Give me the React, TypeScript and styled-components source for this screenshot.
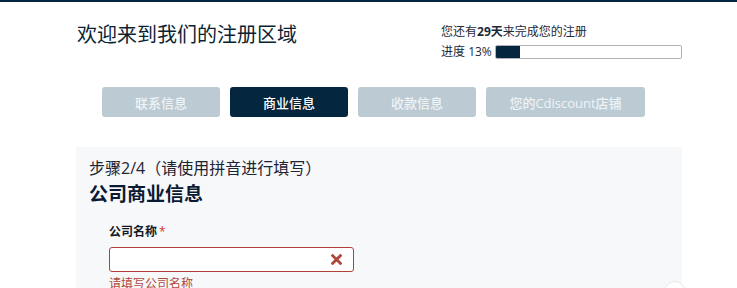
import React from 'react';
import styled, { createGlobalStyle } from 'styled-components';

const GlobalStyle = createGlobalStyle`
  body {
    margin: 0;
    background: #fff;
    font-family: "Open Sans", "Noto Sans CJK SC", sans-serif;
    color: #0b1f33;
    overflow: hidden;
  }
`;

const TopBar = styled.div`
  height: 2px;
  background: #04263f;
`;

const Page = styled.div`
  width: 606px;
  margin-left: 76px;
`;

const Header = styled.header`
  display: flex;
  justify-content: space-between;
  align-items: flex-start;
  padding-top: 19px;
  height: 66px;
  box-sizing: border-box;
`;

const Title = styled.h1`
  margin: 0;
  padding-left: 1px;
  font-size: 20px;
  font-weight: 400;
  line-height: 28px;
  color: #0b1f33;
`;

const Status = styled.div`
  width: 241px;
  display: flex;
  flex-direction: column;
  gap: 3px;
  padding-top: 2px;
  font-size: 12px;
  color: #1d2a38;
`;

const Days = styled.div`
  line-height: 17px;
  b {
    font-weight: 700;
  }
`;

const ProgressRow = styled.div`
  display: flex;
  align-items: center;
  gap: 3px;
  line-height: 17px;
`;

const Track = styled.div`
  flex: 1;
  height: 12px;
  border: 1px solid #aeb3b8;
  border-radius: 2px;
  background: #fff;
  overflow: hidden;
`;

const Fill = styled.div`
  height: 100%;
  background: #04263f;
`;

const Tabs = styled.nav`
  display: flex;
  gap: 10px;
  padding-left: 26px;
  margin-top: 19px;
`;

const Tab = styled.div<{ $active?: boolean; $wide?: boolean }>`
  width: ${(p) => (p.$wide ? 159 : 118)}px;
  height: 30px;
  border-radius: 3px;
  display: flex;
  align-items: center;
  justify-content: center;
  font-size: 13px;
  font-weight: 500;
  background: ${(p) => (p.$active ? '#04263f' : '#bccbd3')};
  color: ${(p) => (p.$active ? '#ffffff' : '#eef3f6')};
`;

const Panel = styled.section`
  margin-top: 30px;
  background: #f7f8fa;
  padding: 10px 13px 20px;
  height: 200px;
  box-sizing: border-box;
`;

const Step = styled.div`
  font-size: 16px;
  line-height: 22px;
  color: #1d2433;
`;

const SectionTitle = styled.h2`
  margin: 2px 0 0;
  font-size: 19px;
  font-weight: 700;
  line-height: 26px;
  color: #0b1a33;
`;

const Field = styled.div`
  margin: 17px 0 0 20px;
  width: 245px;
`;

const Label = styled.label`
  display: block;
  font-size: 12px;
  font-weight: 700;
  line-height: 16px;
  color: #141a24;
  span {
    color: #d0312d;
    font-weight: 400;
    margin-left: 2px;
  }
`;

const InputBox = styled.div`
  margin-top: 7px;
  height: 25px;
  border: 1px solid #b23f3a;
  border-radius: 3px;
  background: #fff;
  display: flex;
  align-items: center;
  justify-content: flex-end;
  padding-right: 11px;
  box-sizing: border-box;
`;

const ErrorText = styled.div`
  margin-top: 4px;
  font-size: 12px;
  line-height: 16px;
  color: #b0473a;
`;

const Bubble = styled.div`
  position: absolute;
  left: 664px;
  top: 281px;
  width: 20px;
  height: 20px;
  border-radius: 50%;
  background: #fff;
  border: 1px solid #e6e8eb;
`;

function ClearIcon() {
  return (
    <svg width="11" height="11" viewBox="0 0 10 10">
      <path d="M1.5 1.5 L8.5 8.5 M8.5 1.5 L1.5 8.5" stroke="#b0473a" strokeWidth="2.6" strokeLinecap="square" />
    </svg>
  );
}

const tabs = [
  { label: '联系信息' },
  { label: '商业信息', active: true },
  { label: '收款信息' },
  { label: '您的Cdiscount店铺', wide: true },
];

export default function App() {
  const progress = 13;
  return (
    <>
      <GlobalStyle />
      <TopBar />
      <Page>
        <Header>
          <Title>欢迎来到我们的注册区域</Title>
          <Status>
            <Days>
              您还有<b>29天</b>来完成您的注册
            </Days>
            <ProgressRow>
              <span>进度 {progress}%</span>
              <Track>
                <Fill style={{ width: `${progress}%` }} />
              </Track>
            </ProgressRow>
          </Status>
        </Header>
        <Tabs>
          {tabs.map((t) => (
            <Tab key={t.label} $active={t.active} $wide={t.wide}>
              {t.label}
            </Tab>
          ))}
        </Tabs>
        <Panel>
          <Step>步骤2/4（请使用拼音进行填写）</Step>
          <SectionTitle>公司商业信息</SectionTitle>
          <Field>
            <Label>
              公司名称<span>*</span>
            </Label>
            <InputBox>
              <ClearIcon />
            </InputBox>
            <ErrorText>请填写公司名称</ErrorText>
          </Field>
        </Panel>
      </Page>
      <Bubble />
    </>
  );
}
